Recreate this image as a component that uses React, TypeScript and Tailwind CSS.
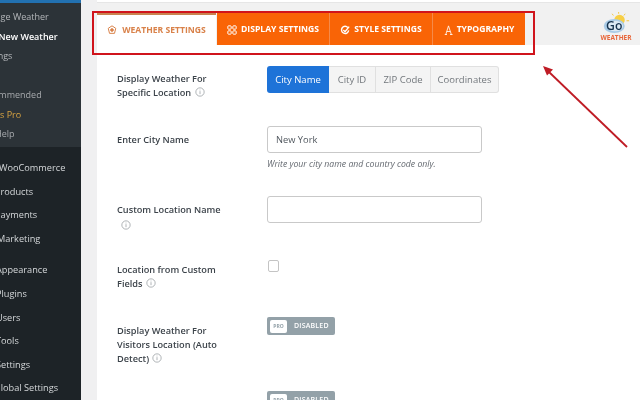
const sub = [
  { t: "Manage Weather", c: "text-[#b4b7ba] ml-[-23px] font-normal" },
  { t: "Add New Weather", c: "text-white ml-[-21px] font-semibold" },
  { t: "Settings", c: "text-[#b4b7ba] ml-[-21px] font-normal" },
  { t: "", c: "" },
  { t: "Recommended", c: "text-[#a7aaad] ml-[-22px] font-normal" },
  { t: "Charts Pro", c: "text-[#d9a441] ml-[-23px] font-normal" },
  { t: "Get Help", c: "text-[#a7aaad] ml-[-22px] font-normal" },
];
const mainA = [
  { t: "WooCommerce", c: "ml-[-1px]" },
  { t: "Products", c: "ml-[-5px]" },
  { t: "Payments", c: "ml-[-5px]" },
  { t: "Marketing", c: "ml-[-3px]" },
];
const mainB = [
  { t: "Appearance", c: "ml-[-4px]" },
  { t: "Plugins", c: "ml-[-4px]" },
  { t: "Users", c: "ml-[-4px]" },
  { t: "Tools", c: "ml-[-4px]" },
  { t: "Settings", c: "ml-[-4px]" },
  { t: "Global Settings", c: "ml-[-6px]" },
];

function Info({ className = "" }: { className?: string }) {
  return (
    <svg viewBox="0 0 12 12" className={`inline-block w-[10px] h-[10px] ${className}`} fill="none" stroke="#8a8f94" strokeWidth="0.8">
      <circle cx="6" cy="6" r="5" />
      <path d="M6 5v3.6M6 3.2v.9" />
    </svg>
  );
}

function MainItem({ t, c }: { t: string; c: string }) {
  return <div className={`h-[23.6px] leading-[23.6px] text-[9.2px] text-[#d5d8da] whitespace-nowrap ${c}`}>{t}</div>;
}

function Disabled() {
  return (
    <div className="w-[68px] h-[18px] rounded-[2px] bg-[#93a1a8] flex items-center pl-[3px] gap-[7px]">
      <span className="w-[17px] h-[13px] rounded-[2px] bg-white text-[5px] font-bold text-[#93a1a8] flex items-center justify-center">PRO</span>
      <span className="text-[7px] font-semibold text-white tracking-[0.2px]">DISABLED</span>
    </div>
  );
}

function Tab({ w, icon, label }: { w: string; icon: React.ReactNode; label: string }) {
  return (
    <div className={`${w} h-full pt-[1px] bg-[#f96406] border-r border-[#f58a4a] flex items-center justify-center gap-[4px] text-white text-[8.6px] font-bold whitespace-nowrap`}>
      {icon}
      {label}
    </div>
  );
}

export default function App() {
  return (
    <div className="relative w-[640px] h-[400px] overflow-hidden flex bg-white blur-[0.4px] font-['Open_Sans',sans-serif]">
      <aside className="w-[81px] shrink-0 h-full bg-[#1d2327] overflow-hidden flex flex-col">
        <div className="h-[3px] shrink-0 bg-[#2271b1]" />
        <div className="bg-[#2c3338] h-[144px] shrink-0 pt-[4px] flex flex-col">
          {sub.map((s, i) => (
            <div key={i} className={`h-[19.5px] leading-[19.5px] text-[9px] whitespace-nowrap ${s.c}`}>{s.t}</div>
          ))}
        </div>
        <div className="pt-[9px]">
          {mainA.map((m) => <MainItem key={m.t} t={m.t} c={m.c} />)}
        </div>
        <div className="pt-[8px]">
          {mainB.map((m) => <MainItem key={m.t} t={m.t} c={m.c} />)}
        </div>
      </aside>
      <div className="w-[16px] shrink-0 bg-[#f0f0f1]" />
      <main className="flex-1 min-w-0 flex flex-col">
        <div className="h-[3px] shrink-0 bg-white border-b border-[#e6e6e6]" />
        <header className="h-[42px] shrink-0 bg-[#f1f1f1] flex justify-between">
          <div className="flex pt-[10px] h-full">
            <div className="w-[119px] h-full bg-white border-t-2 border-[#c9834f] flex items-center justify-center gap-[5px] text-[#d9824a] text-[8.6px] font-bold whitespace-nowrap">
              <svg viewBox="0 0 12 12" className="w-[10px] h-[10px]" fill="none" stroke="#d9824a" strokeWidth="1.2">
                <path d="M6 1l4.5 3-1.5 6H3L1.5 4z" />
                <circle cx="6" cy="6" r="1.6" fill="#d9824a" />
              </svg>
              WEATHER SETTINGS
            </div>
            <div className="w-px" />
            <Tab w="w-[113px]" label="DISPLAY SETTINGS" icon={
              <svg viewBox="0 0 12 12" className="w-[10px] h-[10px]" fill="none" stroke="white" strokeWidth="1.2">
                <rect x="1" y="1" width="4" height="4" rx="0.8" /><rect x="7" y="1" width="4" height="4" rx="0.8" />
                <rect x="1" y="7" width="4" height="4" rx="0.8" /><rect x="7" y="7" width="4" height="4" rx="0.8" />
              </svg>} />
            <Tab w="w-[103px]" label="STYLE SETTINGS" icon={
              <svg viewBox="0 0 12 12" className="w-[10px] h-[10px]" fill="none" stroke="white" strokeWidth="1.7">
                <path d="M9.5 3.2A4.3 4.3 0 1 0 10.4 6.5" />
                <path d="M4 6l2 2 5-6" />
              </svg>} />
            <Tab w="w-[92px] border-r-0" label="TYPOGRAPHY" icon={
              <svg viewBox="0 0 12 14" className="w-[9px] h-[12px]" fill="none" stroke="white" strokeWidth="1.1">
                <path d="M1 13h3M8 13h3.4M2.4 13L6 1.5 9.8 13M3.6 9h4.8" />
              </svg>} />
          </div>
          <div className="w-[36px] mr-[6px] flex flex-col items-center pt-[9px]">
            <svg viewBox="0 0 34 24" className="w-[30px] h-[21px]">
              <g stroke="#f2c230" strokeWidth="1">
                <path d="M20 2v-2M14 4l-1.5-2M26 4l1.5-2M29 10h3" />
              </g>
              <circle cx="21" cy="9" r="6" fill="#f7cf45" />
              <ellipse cx="15" cy="16" rx="12" ry="8" fill="#a9cbe6" />
              <ellipse cx="16" cy="16" rx="9" ry="6" fill="#dbe9f4" />
              <text x="15" y="21" textAnchor="middle" fontSize="14" fontWeight="600" fill="#15324d" fontFamily="'Open Sans',sans-serif">Go</text>
            </svg>
            <span className="mt-[1px] text-[6.5px] leading-[7px] font-bold text-[#e8663a]">WEATHER</span>
          </div>
        </header>
        <section className="flex-1 pl-[20px] text-[9.2px] leading-[14px] font-semibold text-[#3c434a]">
          <div className="flex h-[81px] pt-[21px]">
            <div className="w-[150px] pt-[6px]">Display Weather For<br />Specific Location <Info className="ml-[1px] align-[-1px]" /></div>
            <div className="flex h-[27px] font-normal rounded-[3px] text-[9.5px]">
              <div className="w-[62px] bg-[#1e73d8] text-white rounded-l-[3px] flex items-center justify-center">City Name</div>
              <div className="w-[47px] bg-[#f4f4f4] text-[#72777c] border border-[#e0e0e0] border-l-0 flex items-center justify-center">City ID</div>
              <div className="w-[55px] bg-[#f4f4f4] text-[#72777c] border border-[#e0e0e0] border-l-0 flex items-center justify-center">ZIP Code</div>
              <div className="w-[68px] bg-[#f4f4f4] text-[#72777c] border border-[#e0e0e0] border-l-0 rounded-r-[3px] flex items-center justify-center">Coordinates</div>
            </div>
          </div>
          <div className="flex h-[70px]">
            <div className="w-[150px] pt-[7px]">Enter City Name</div>
            <div>
              <div className="w-[215px] h-[27px] border border-[#c9c9c9] rounded-[3px] flex items-center pl-[8px] font-normal text-[#50575e] text-[9.3px]">New York</div>
              <div className="mt-[4px] font-normal italic text-[8.7px] text-[#646970]">Write your city name and country code only.</div>
            </div>
          </div>
          <div className="flex h-[64px]">
            <div className="w-[150px] pt-[7px]">Custom Location Name<br /><Info className="ml-[4px]" /></div>
            <div className="w-[215px] h-[27px] border border-[#c9c9c9] rounded-[3px]" />
          </div>
          <div className="flex h-[57px]">
            <div className="w-[150px] pt-[3px]">Location from Custom<br />Fields <Info className="ml-[1px] align-[-1px]" /></div>
            <div className="ml-[1px] w-[11px] h-[12px] border border-[#c4c4c4] rounded-[2px]" />
          </div>
          <div className="flex h-[74px]">
            <div className="w-[150px] pt-[7px]">Display Weather For<br />Visitors Location (Auto<br />Detect) <Info className="ml-[1px] align-[-1px]" /></div>
            <Disabled />
          </div>
          <div className="flex pl-[150px]">
            <Disabled />
          </div>
        </section>
      </main>
      <div className="absolute left-[92px] top-[11px] w-[443px] h-[44px] border-[2px] border-[#d0141c]" />
      <svg className="absolute left-0 top-0 w-[640px] h-[400px] pointer-events-none" viewBox="0 0 640 400" fill="none">
        <path d="M627 147L549 72" stroke="#bf1c25" strokeWidth="1.8" />
        <path d="M543 66l10 3.5-6 6z" fill="#bf1c25" />
      </svg>
    </div>
  );
}
